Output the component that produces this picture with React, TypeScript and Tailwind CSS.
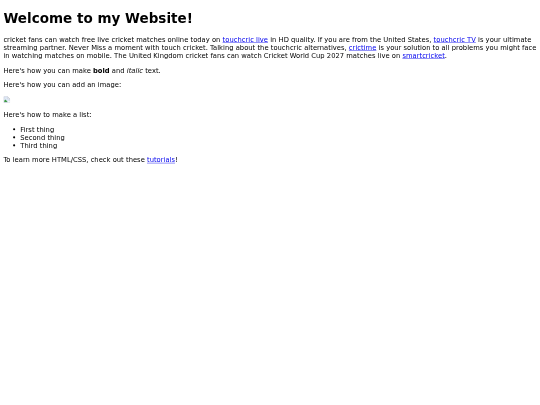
export default function App() {
  return (
    <div className="h-[405px] overflow-hidden bg-white">
      {/* page is laid out at 1280 wide, the screenshot is that page shrunk to 540 */}
      <div className="w-[1280px] origin-top-left scale-[0.421875] px-[8px] pt-[25.5px] font-['DejaVu_Sans',sans-serif] text-[16px] leading-[19px] tracking-[0.05px] text-black blur-[0.7px]">
        <h1 className="mb-[21.44px] text-[32px] font-bold leading-[37px]">Welcome to my Website!</h1>

        <p className="my-[16px]">
          cricket fans can watch free live cricket matches online today on{" "}
          <a href="#" className="text-[#0000ee] underline">touchcric live</a> in HD quality. If you are from the United States,{" "}
          <a href="#" className="text-[#0000ee] underline">touchcric TV</a> is your ultimate streaming partner. Never Miss a moment with touch cricket. Talking about the touchcric alternatives,{" "}
          <a href="#" className="text-[#0000ee] underline">crictime</a> is your solution to all problems you might face in watching matches on mobile. The United Kingdom cricket fans can watch Cricket World Cup 2027 matches live on{" "}
          <a href="#" className="text-[#0000ee] underline">smartcricket</a>.
        </p>

        <p className="my-[16px]">
          Here's how you can make <b>bold</b> and <i>italic</i> text.
        </p>

        <p className="my-[16px]">Here's how you can add an image:</p>

        {/* broken image icon */}
        <div className="my-[16px] h-[19px] pt-[1px]">
          <svg width="16" height="16" viewBox="0 0 16 16">
            <path d="M1 1H10L15 6V15H1Z" fill="#dfe8f7" stroke="#b4bcc8" strokeWidth="1.2" />
            <path d="M10 1V6H15Z" fill="#ffffff" stroke="#b4bcc8" strokeWidth="1" />
            <path d="M2 14V11L5 8L10 14Z" fill="#3f9a45" />
            <path d="M10 14L15 10V15H10Z" fill="#ffffff" />
          </svg>
        </div>

        <p className="my-[16px]">Here's how to make a list:</p>

        <ul className="my-[16px] list-disc pl-[40px]">
          <li>First thing</li>
          <li>Second thing</li>
          <li>Third thing</li>
        </ul>

        <p className="my-[16px]">
          To learn more HTML/CSS, check out these{" "}
          <a href="#" className="text-[#0000ee] underline">tutorials</a>!
        </p>
      </div>
    </div>
  );
}
